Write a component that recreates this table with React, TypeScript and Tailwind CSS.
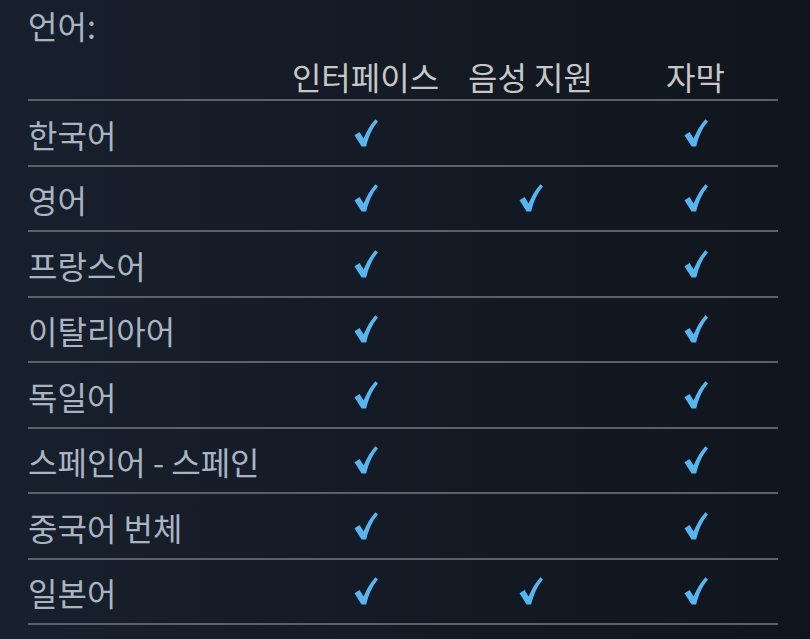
import React from 'react';

type Lang = { name: string; ui: boolean; voice: boolean; subs: boolean };

const languages: Lang[] = [
  { name: '한국어', ui: true, voice: false, subs: true },
  { name: '영어', ui: true, voice: true, subs: true },
  { name: '프랑스어', ui: true, voice: false, subs: true },
  { name: '이탈리아어', ui: true, voice: false, subs: true },
  { name: '독일어', ui: true, voice: false, subs: true },
  { name: '스페인어 - 스페인', ui: true, voice: false, subs: true },
  { name: '중국어 번체', ui: true, voice: false, subs: true },
  { name: '일본어', ui: true, voice: true, subs: true },
];

const Check: React.FC = () => (
  <svg width="24" height="28" viewBox="0 0 24 28" className="block">
    <path
      d="M0.5 16.2 L5.6 13 L9.6 19.6 C12.6 12 16.6 5.6 21.4 0.2 L24 2.4 C18.6 8.6 14.6 17 12.2 27.6 L7.6 27.6 Z"
      fill="#57b6f0"
    />
  </svg>
);

const Cell: React.FC<{ on: boolean }> = ({ on }) => (
  <div className="w-[165px] flex justify-center items-center">{on && <Check />}</div>
);

const App: React.FC = () => {
  return (
    <div
      className="w-[810px] h-[639px] overflow-hidden bg-gradient-to-r from-[#18202d] to-[#10151d] pl-[28px]"
      style={{ fontFamily: '"Noto Sans CJK KR", "Noto Sans", sans-serif' }}
    >
      <div className="w-[750px]">
        <div className="h-[49px] flex items-center text-[32px] text-[#a9b4c2] leading-none">언어:</div>

        <div className="h-[52px] flex items-end pb-[7px] border-b-2 border-[#5c6068] text-[32px] text-[#c7c7c7] leading-none">
          <div className="w-[255px]" />
          <div className="w-[165px] text-center whitespace-nowrap">인터페이스</div>
          <div className="w-[165px] text-center whitespace-nowrap">음성 지원</div>
          <div className="w-[165px] text-center whitespace-nowrap">자막</div>
        </div>

        {languages.map((l) => (
          <div
            key={l.name}
            className="h-[65.5px] flex items-center border-b-2 border-[#5c6068] text-[32px] text-[#a9b4c2] leading-none"
          >
            <div className="w-[255px] whitespace-nowrap pt-[2px]">{l.name}</div>
            <Cell on={l.ui} />
            <Cell on={l.voice} />
            <Cell on={l.subs} />
          </div>
        ))}
      </div>
    </div>
  );
};

export default App;
